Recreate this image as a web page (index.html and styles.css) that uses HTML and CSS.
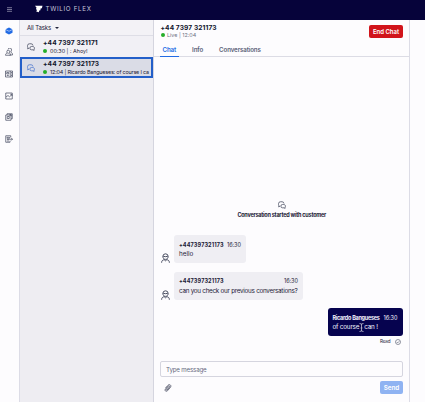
FILE: index.html
```html
<!DOCTYPE html>
<html lang="en">
<head>
<meta charset="utf-8">
<title>Twilio Flex</title>
<link rel="stylesheet" href="styles.css">
</head>
<body>
<svg class="defs" aria-hidden="true">
  <symbol id="chat" viewBox="0 0 16 16"><path d="M4 10 1.500 12V9A4 4 0 0 1 1 7V5.500a4 4 0 0 1 4-4h3a4 4 0 0 1 4 3.500M9 7h2.500a3.300 3.300 0 0 1 2.700 5.300v2.500L12 13.600H9A3.300 3.300 0 0 1 9 7Z"/></symbol>
  <symbol id="person" viewBox="0 0 16 18"><path d="M8 1.500a4.800 4.800 0 0 0-4.800 4.500c0 3 2 5.500 4.800 5.500s4.800-2.500 4.800-5.500A4.800 4.800 0 0 0 8 1.500ZM4 6c3 .8 5 .8 8 0M1 17.500c0-3.500 2-5 4.500-5.500L8 14l2.500-2c2.500.5 4.500 2 4.500 5.500"/></symbol>
</svg>
<header class="topbar">
  <svg class="menu" viewBox="0 0 5 5"><path d="M0 .7h5M0 2.500h5M0 4.300h5"/></svg>
  <svg class="logo" viewBox="0 0 8 8"><path d="M0 .8H7.500L6.900 3.300 5.600 3.500 5.400 5.300 4.300 5.500 3.800 7.200 1.200 6.500 2 4.900.9 4 1.600 2.700Z"/></svg>
  <span class="brand">TWILIO FLEX</span>
</header>
<div class="app">
  <nav class="rail">
    <svg class="active" viewBox="0 0 16 16"><path d="m8 1 7 3.500L8 8 1 4.500ZM1 5.500 8 9l7-3.500v6L8 15l-7-3.500Z"/></svg>
    <svg viewBox="0 0 16 16"><path d="M6 3a3.500 3.500 0 0 1 7 1c0 2-1 3.500-2 4 3 1 4 3 4 6H9M6.500 4.500a2.800 2.800 0 0 0-2.800 3c0 1.800 1.200 3 2.800 3s2.800-1.200 2.800-3a2.800 2.800 0 0 0-2.800-3ZM1 14.500c0-3 1.500-4 3.500-4.500M11 14.500c0-3-1-4-2.500-4.500M1 14.500h10"/></svg>
    <svg viewBox="0 0 16 16"><path d="M1 2h14v12H1ZM10.500 2v12M3.500 5h4v3h-4ZM3.500 11h4M12 5h2M12 8h2M12 11h2"/></svg>
    <svg viewBox="0 0 16 16"><path d="M1.500 2h13v12h-13ZM2 10l4-3 3 2.500L14 5M10.500 4.500H14V8"/></svg>
    <svg viewBox="0 0 16 16"><path d="M4 4V1.500h10.500v10H12M1.500 4H12v10.500H1.500ZM4.500 7h4v4h-4ZM8 7l4-4M9 3h3.500v3.500"/></svg>
    <svg viewBox="0 0 16 16"><path d="M1.500 1.500h10V5M1.500 1.500v13h8.500v-3M4 4.500h5v2H4ZM4 9h4M4 12h4M8 8.500h7M12.500 6l2.500 2.500-2.500 2.500"/></svg>
  </nav>
  <aside class="tasks">
    <div class="filter"><span>All Tasks</span><i class="caret"></i></div>
    <div class="task">
      <svg class="chat-icon"><use href="#chat"/></svg>
      <div class="info">
        <b class="phone">+44 7397 321171</b>
        <div class="line"><i class="dot"></i><span class="ahoy">00:30 | : Ahoy!</span></div>
      </div>
    </div>
    <div class="task selected">
      <svg class="chat-icon"><use href="#chat"/></svg>
      <div class="info">
        <b class="phone">+44 7397 321173</b>
        <div class="line"><i class="dot"></i><span class="preview">12:04 | Ricardo Bangueses: of course I ca</span></div>
      </div>
    </div>
  </aside>
  <main class="chat">
    <div class="head">
      <div class="who">
        <b class="phone">+44 7397 321173</b>
        <div class="line"><i class="dot"></i><span class="live">Live | 12:04</span></div>
      </div>
      <button class="end">End Chat</button>
    </div>
    <div class="tabs"><span class="tab on">Chat</span><span class="tab">Info</span><span class="tab conv">Conversations</span></div>
    <div class="log">
      <div class="started"><svg class="chat-icon"><use href="#chat"/></svg><b>Conversation started with customer</b></div>
      <div class="msg">
        <svg class="avatar"><use href="#person"/></svg>
        <div class="bubble short"><div class="meta"><b>+447397321173</b><time>16:30</time></div><p>hello</p></div>
      </div>
      <div class="msg">
        <svg class="avatar"><use href="#person"/></svg>
        <div class="bubble long"><div class="meta"><b>+447397321173</b><time>16:30</time></div><p class="question">can you check our previous conversations?</p></div>
      </div>
      <div class="msg mine">
        <div class="bubble own"><div class="meta"><b>Ricardo Bangueses</b><time>16:30</time></div><p>of course<svg class="cursor" viewBox="0 0 5 9"><path d="M.5.500 2.500 1 4.500.5M2.500 1v7M.5 8.500l2-.5 2 .5M1.500 5h2"/></svg>can !</p></div>
      </div>
      <div class="receipt"><span>Read</span><svg viewBox="0 0 12 12"><circle cx="6" cy="6" r="5"/><path d="m3.500 6 1.800 1.800L8.500 4.500"/></svg></div>
    </div>
    <div class="input"><span>Type message</span></div>
    <div class="actions">
      <svg class="clip" viewBox="0 0 16 16"><path d="m3 8 5-5.500c3-3 7.500 0 5 4L7 13.500c-3 3-6.500-.5-4-3.500l5.500-6c2-1.500 4 .5 2.500 2.500l-5 5.500c-1.500 1-2.500-.5-1.500-1.500l5-5"/></svg>
      <button class="send">Send</button>
    </div>
  </main>
  <div class="side"></div>
</div>
</body>
</html>
```

FILE: styles.css
```css
* { box-sizing: border-box; }
body {
  margin: 0;
  width: 425px;
  height: 402px;
  overflow: hidden;
  display: flex;
  flex-direction: column;
  background: #fdfcfe;
  color: #1c2036;
  font-family: Inter, "Liberation Sans", sans-serif;
  font-size: 6px;
  line-height: 8px;
  white-space: nowrap;
}
svg { display: block; flex: none; fill: none; stroke: #4c5165; stroke-width: 1.6; }
.defs { position: absolute; width: 0; height: 0; }
button { border: 0; padding: 0; font-family: inherit; color: #fff; font-weight: 600; border-radius: 2px; }
p { margin: 0; }

.topbar { height: 20px; flex: none; display: flex; align-items: center; background: #06033a; padding: 0 0 2px 7px; }
.menu { width: 5px; height: 5px; stroke: #a5a3bc; stroke-width: .7; }
.logo { width: 8px; height: 8px; margin-left: 23px; fill: #fff; stroke: none; }
.brand { margin-left: 2.500px; color: #c9c7da; font-size: 6.2px; letter-spacing: .69px; }

.app { flex: 1; display: flex; min-height: 0; }
.rail { width: 20px; flex: none; border-right: 1px solid #dcdce6; display: flex; flex-direction: column; align-items: center; gap: 13.700px; padding: 6.500px 1px 0 0; }
.rail svg { width: 8px; height: 8px; stroke-width: 1.500; }
.rail .active { fill: #226be4; stroke: none; }

.tasks { width: 134px; flex: none; background: #eeedf2; border-right: 1px solid #d5d5df; }
.filter { height: 16px; display: flex; align-items: center; gap: 4px; padding-left: 7px; font-size: 6px; letter-spacing: -.12px; background: #f3f2f6; border-bottom: 1px solid #dedee6; }
.caret { border: 2px solid transparent; border-top: 2px solid #20243b; border-bottom: 0; }
.task { height: 21px; display: flex; align-items: center; background: #f1f0f5; }
.task.selected { background: #dadce6; outline: 2px solid #235fc9; outline-offset: -2px; }
.task .chat-icon { margin: 0 8px 0 7px; }
.selected .chat-icon { stroke: #4f79cf; }
.chat-icon { width: 8px; height: 8px; }
.phone { display: block; width: 56px; font-size: 6.600px; line-height: 8px; letter-spacing: .1px; color: #10142b; }
.line { display: flex; align-items: center; height: 7px; font-size: 5.400px; }
.preview { letter-spacing: -.17px; }
.dot { width: 4px; height: 4px; flex: none; border-radius: 50%; background: #25ae2a; margin-right: 3px; }

.chat { width: 255px; flex: none; display: flex; flex-direction: column; }
.head { height: 22px; flex: none; display: flex; justify-content: space-between; padding: 3.500px 6px 0 7px; }
.who { margin-left: -.5px; }
.head .dot { margin-right: 2.500px; }
.live { color: #6d7184; }
.end { width: 34px; height: 13px; margin-top: 1px; background: #d1141b; font-size: 6px; }
.tabs { height: 15px; flex: none; display: flex; padding-left: 6px; gap: 11px; border-bottom: 1px solid #dcdce5; color: #5b6178; font-size: 6.200px; line-height: 15px; font-weight: 600; letter-spacing: -.13px; }
.tab { padding: 0 2.500px; }
.tab.on { color: #226be4; height: 15px; border-bottom: 1px solid #226be4; }
.log { flex: 1; min-height: 0; padding: 0 6.500px 0 7px; }
.started { margin-top: 143.500px; display: flex; flex-direction: column; align-items: center; gap: 2px; font-size: 5.500px; letter-spacing: -.23px; }
.msg { display: flex; align-items: flex-end; margin-top: 8.500px; }
.started + .msg { margin-top: 16.500px; }
.avatar { width: 9px; height: 10px; margin-right: 4px; stroke: #34394f; }
.bubble { height: 28px; background: #efeef3; border-radius: 3px; padding: 5px; font-size: 6.300px; line-height: 10px; }
.short { width: 72px; }
.long { width: 129px; }
.question { letter-spacing: -.26px; }
.own { width: 75px; background: #06034f; color: #f5f4ff; }
.meta { display: flex; justify-content: space-between; align-items: center; height: 9px; font-size: 5.500px; }
.meta b { font-weight: 700; letter-spacing: .14px; }
.mine { justify-content: flex-end; }
.own .meta b { letter-spacing: -.27px; }
.own p { display: flex; align-items: center; letter-spacing: -.18px; }
.cursor { width: 5px; height: 9px; stroke: #c7c6d4; stroke-width: .8; }
.receipt { display: flex; justify-content: flex-end; align-items: center; gap: 4px; margin-top: 1.500px; padding-right: 2px; font-size: 4.600px; letter-spacing: -.1px; }
.receipt svg { width: 6px; height: 6px; stroke-width: 1.200; }
.input { height: 16px; flex: none; margin: 0 6px; border: 1px solid #d5d5df; border-radius: 2px; padding-left: 5px; line-height: 15px; font-size: 6.200px; letter-spacing: -.18px; color: #656a80; }
.actions { height: 25px; flex: none; display: flex; justify-content: space-between; padding: 4px 6px 0 10px; }
.clip { width: 8px; height: 8px; margin-top: 3px; }
.send { width: 23px; height: 13px; background: #8fb3f2; font-size: 6.300px; }
.side { flex: 1; border-left: 1px solid #dcdce6; }
```
